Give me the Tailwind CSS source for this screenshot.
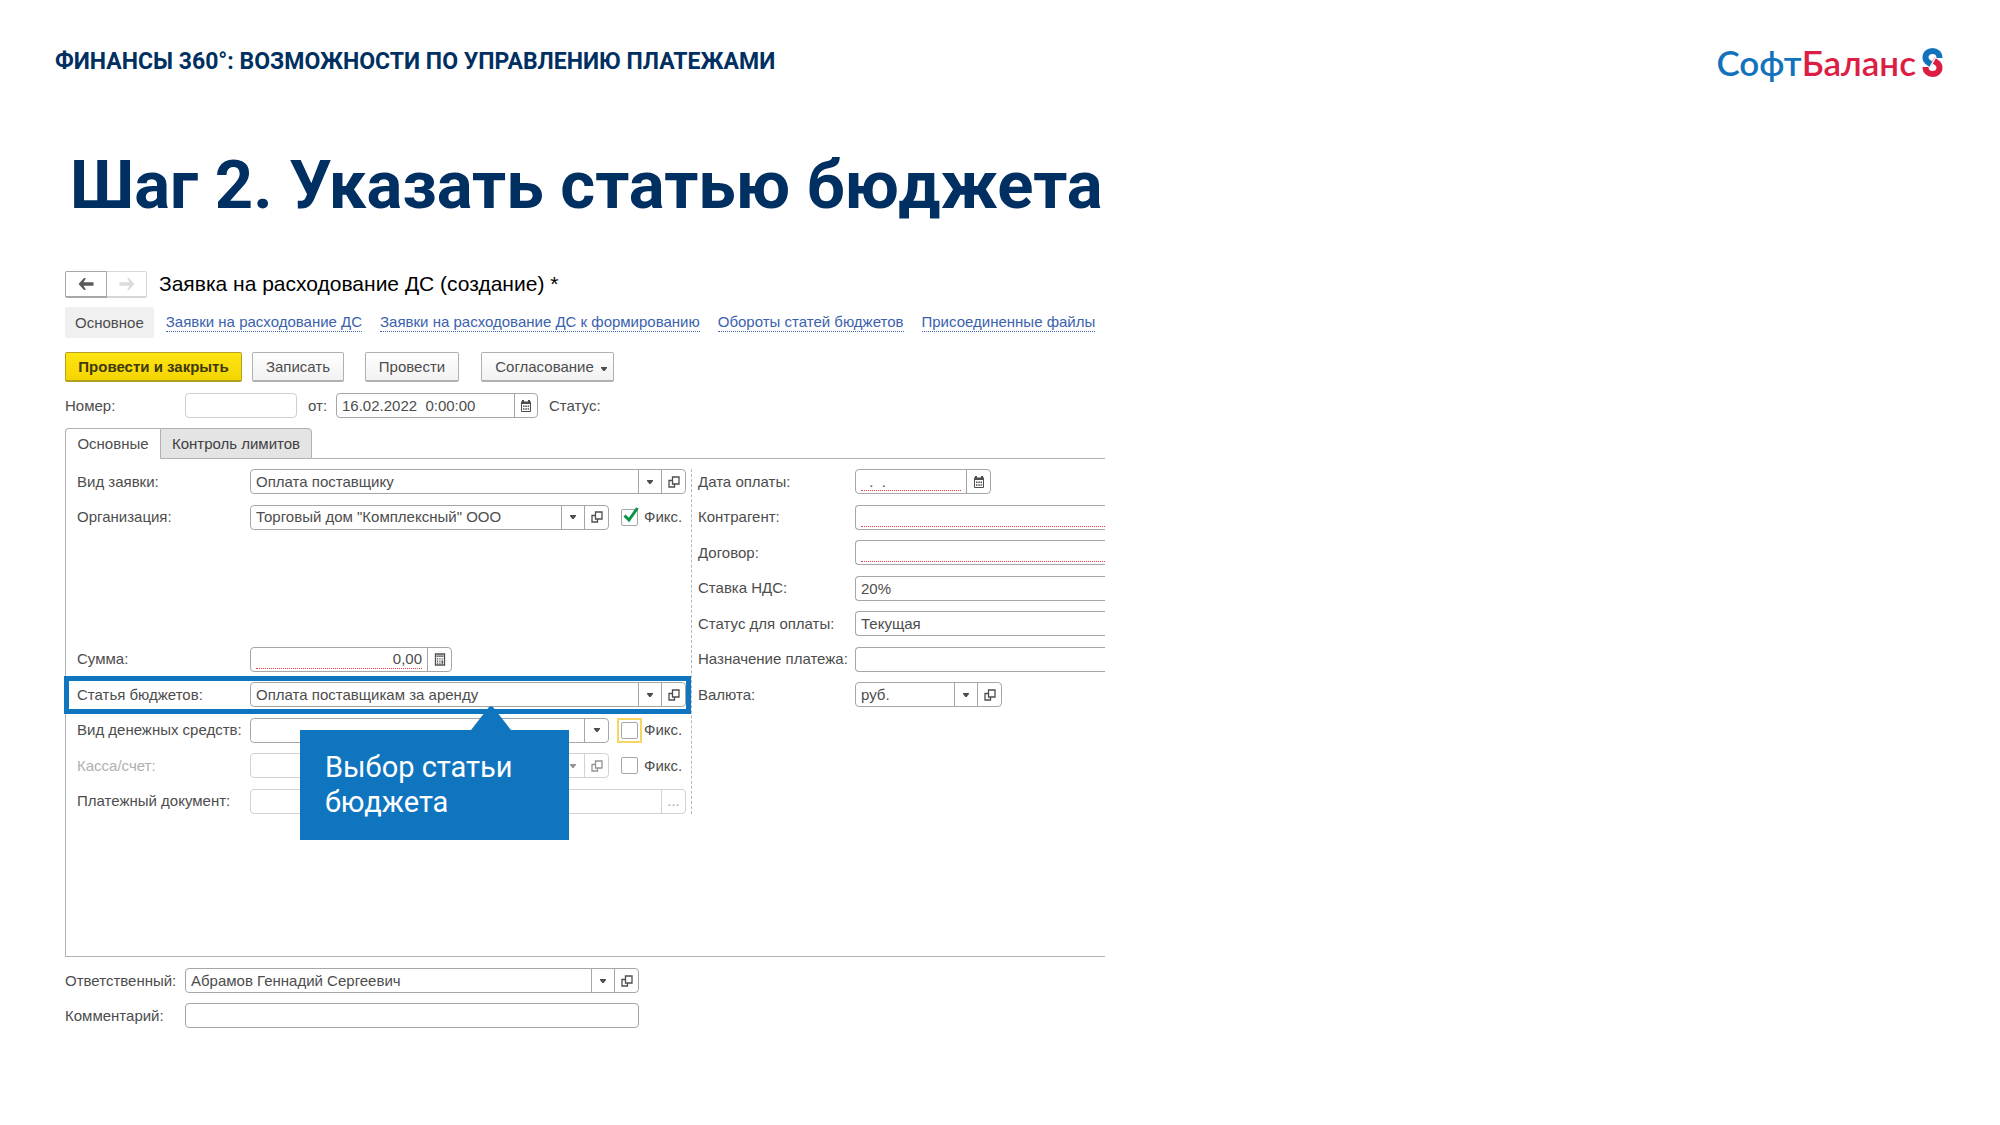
<!DOCTYPE html>
<html lang="ru">
<head>
<meta charset="utf-8">
<meta name="viewport" content="width=device-width, initial-scale=1">
<title>Финансы 360°: возможности по управлению платежами</title>
<script src="https://cdn.jsdelivr.net/npm/@tailwindcss/browser@4"></script>
</head>
<body class="min-h-screen bg-white font-['Roboto',sans-serif]">

<!-- Shared icons -->
<svg class="hidden" aria-hidden="true">
  <symbol id="caret" viewBox="0 0 8 4"><path d="M1 0h6v1L4.600 4h-1.200L1 1z" fill="currentColor"/></symbol>
  <symbol id="open" viewBox="0 0 12 12"><path d="M4.500 1h6.500v7H4.500zM4 4.500H1V11h5.500V8.500" fill="none" stroke="currentColor" stroke-width="1.300"/></symbol>
  <symbol id="calendar" viewBox="0 0 12 12"><path d="M1 1.500h1V0h2v1.500h4V0h2v1.500h1V4H1z" fill="currentColor"/><path d="M1.500 4v7.500h9V4" fill="none" stroke="currentColor"/><path d="M3 5.500h1.500V7H3zM5.300 5.500h1.500V7H5.300zM7.600 5.500h1.500V7H7.600zM3 8.300h1.500v1.500H3zM5.300 8.300h1.500v1.500H5.300zM7.600 8.300h1.500v1.500H7.600z" fill="currentColor"/></symbol>
  <symbol id="calculator" viewBox="0 0 12 13"><path d="M1.500 1h9v11h-9z" fill="none" stroke="currentColor" stroke-width="1.300"/><path d="M2.500 2.500h7v1.200h-7zM3 5.300h1.200v1.200H3zM5.300 5.300h1.200v1.200H5.300zM3 7.500h1.200v1.200H3zM5.300 7.500h1.200v1.200H5.300zM3 9.600h1.200v1.200H3zM5.300 9.600h1.200v1.200H5.300zM7.500 5.300h1.200v1.200H7.500zM7.500 7.500h1.500v3.300H7.500z" fill="currentColor"/></symbol>
  <symbol id="arrow-left" viewBox="0 0 16 12"><path d="M7.500 0v1L5.500 4.300H15.500v3.400h-10l2 3.300v1H6L.500 6 6 0z" fill="currentColor"/></symbol>
</svg>

<header class="flex h-[122px] items-center justify-between pt-[2px] pr-[57px] pl-[55px]">
  <p class="text-[23px] font-bold leading-8 text-[#002f61]">ФИНАНСЫ 360°: ВОЗМОЖНОСТИ ПО УПРАВЛЕНИЮ ПЛАТЕЖАМИ</p>
  <a href="#" class="flex items-center gap-[6px]" aria-label="СофтБаланс">
    <span class="font-['Lato',sans-serif] text-[35px] font-semibold leading-10 text-[#dc1e45]"><span class="text-[#1273bc]">Софт</span>Баланс</span>
    <svg class="h-[29px] w-[21px]" viewBox="0 0 21 29" fill="none" aria-hidden="true">
      <path d="M17.500 10C17.500 5.500 14.500 3 10.500 3 6.500 3 3.500 5.500 3.500 9.500 3.500 12 5 13.500 6.500 14.500L10 17" stroke="#1273bc" stroke-width="6"/>
      <path d="M3.500 19C3.500 23.500 6.500 26 10.500 26 14.500 26 17.500 23.500 17.500 19.500 17.500 17 16 15.500 14.500 14.500L11 12" stroke="#dc1e45" stroke-width="6"/>
      <path d="M7.500 20 13.500 9.500" stroke="#fff" stroke-width="1.500"/>
    </svg>
  </a>
</header>

<main>
  <h1 class="pt-[23px] pl-[70px] text-[67px] font-bold leading-[80px] text-[#002f61]">Шаг 2. Указать статью бюджета</h1>

  <form class="mt-[46px] ml-[65px] w-[52%] whitespace-nowrap font-['Liberation_Sans',Arial,sans-serif] text-[15px] leading-5 text-[#4d4d4d]">

    <div class="flex items-center">
      <button type="button" aria-label="Назад" class="flex h-[27px] w-[42px] items-center justify-center rounded-l-xs border border-b-2 border-[#a8a8a8] text-[#5a5a5a]"><svg class="h-3 w-4"><use href="#arrow-left"/></svg></button>
      <button type="button" aria-label="Вперед" class="flex h-[27px] w-10 items-center justify-center rounded-r-xs border border-l-0 border-b-2 border-[#d6d6d6] text-[#dcdcdc]"><svg class="h-3 w-4 rotate-180"><use href="#arrow-left"/></svg></button>
      <h2 class="ml-3 pb-[2px] text-[21px] leading-[25px] text-black">Заявка на расходование ДС (создание) *</h2>
    </div>

    <nav class="mt-[9px] flex h-[31px] items-center text-[#3a62ae]">
      <a href="#" class="mr-3 flex h-full items-center rounded-xs bg-[#f0f0f0] px-[10px] text-[#4d4d4d]">Основное</a>
      <a href="#" class="mr-[18px] border-b border-dotted border-[#3a62ae] leading-[18px]">Заявки на расходование ДС</a>
      <a href="#" class="mr-[18px] border-b border-dotted border-[#3a62ae] leading-[18px]">Заявки на расходование ДС к формированию</a>
      <a href="#" class="mr-[18px] border-b border-dotted border-[#3a62ae] leading-[18px]">Обороты статей бюджетов</a>
      <a href="#" class="border-b border-dotted border-[#3a62ae] leading-[18px]">Присоединенные файлы</a>
    </nav>

    <div class="mt-[14px] flex h-[30px]">
      <button type="submit" class="w-[177px] rounded-xs border border-b-2 border-[#b3a020] bg-linear-to-b from-[#ffe514] to-[#f3d500] font-bold text-[#40390c]">Провести и закрыть</button>
      <button type="button" class="ml-[10px] w-[92px] rounded-xs border border-b-2 border-[#b0b0b0] bg-linear-to-b from-white to-[#f2f2f2]">Записать</button>
      <button type="button" class="ml-[21px] w-[94px] rounded-xs border border-b-2 border-[#b0b0b0] bg-linear-to-b from-white to-[#f2f2f2]">Провести</button>
      <button type="button" class="ml-[22px] flex w-[133px] items-center justify-center gap-[6px] rounded-xs border border-b-2 border-[#b0b0b0] bg-linear-to-b from-white to-[#f2f2f2] pl-2">Согласование <svg class="mt-1 h-1 w-2"><use href="#caret"/></svg></button>
    </div>

    <div class="mt-[11px] flex h-[25px] items-center">
      <label for="number" class="w-[120px]">Номер:</label>
      <input id="number" type="text" class="h-full w-[112px] rounded-sm border border-[#cfcfcf] px-[5px]">
      <label for="date" class="w-[39px] pl-[11px]">от:</label>
      <div class="flex h-full w-[202px] rounded-sm border border-[#a6a6a6]">
        <input id="date" type="text" value="16.02.2022&nbsp; 0:00:00" class="min-w-0 flex-1 px-[5px]">
        <button type="button" aria-label="Календарь" class="flex w-[23px] items-center justify-center border-l border-[#a6a6a6]"><svg class="size-3"><use href="#calendar"/></svg></button>
      </div>
      <span class="ml-[11px]">Статус:</span>
    </div>

    <div role="tablist" class="mt-[10px] flex h-[31px]">
      <button type="button" role="tab" aria-selected="true" class="z-10 w-[95px] rounded-tl-sm border border-r-0 border-b-0 border-[#b0b0b0] bg-white">Основные</button>
      <button type="button" role="tab" aria-selected="false" class="w-[152px] rounded-tr-sm border border-[#b0b0b0] bg-[#e4e4e4] text-[#404040]">Контроль лимитов</button>
      <div class="flex-1 border-b border-[#b0b0b0]"></div>
    </div>

    <div role="tabpanel" class="flex h-[498px] items-start border-b border-l border-[#b0b0b0] pt-[5px] pl-[11px]">

      <div class="grid h-[355px] w-[609px] shrink-0 grid-rows-10">
        <div class="flex items-center">
          <label for="kind" class="w-[173px]">Вид заявки:</label>
          <div class="flex h-[25px] flex-1 rounded-sm border border-[#a6a6a6]">
            <div class="relative flex-1">
              <select id="kind" class="h-full w-full appearance-none px-[5px]"><option>Оплата поставщику</option></select>
              <span class="pointer-events-none absolute inset-y-0 right-0 flex w-[23px] items-center justify-center border-l border-[#a6a6a6]"><svg class="h-1 w-2"><use href="#caret"/></svg></span>
            </div>
            <button type="button" aria-label="Открыть" class="flex w-6 items-center justify-center border-l border-[#a6a6a6]"><svg class="size-3"><use href="#open"/></svg></button>
          </div>
        </div>
        <div class="flex items-center">
          <label for="org" class="w-[173px]">Организация:</label>
          <div class="flex h-[25px] w-[359px] rounded-sm border border-[#a6a6a6]">
            <div class="relative flex-1">
              <select id="org" class="h-full w-full appearance-none px-[5px]"><option>Торговый дом "Комплексный" ООО</option></select>
              <span class="pointer-events-none absolute inset-y-0 right-0 flex w-[23px] items-center justify-center border-l border-[#a6a6a6]"><svg class="h-1 w-2"><use href="#caret"/></svg></span>
            </div>
            <button type="button" aria-label="Открыть" class="flex w-6 items-center justify-center border-l border-[#a6a6a6]"><svg class="size-3"><use href="#open"/></svg></button>
          </div>
          <label class="relative ml-3 flex items-center gap-[6px]">
            <input type="checkbox" checked class="peer size-[17px] appearance-none rounded-xs border border-[#a6a6a6]">
            <svg class="pointer-events-none invisible absolute top-0 left-[2px] size-4 peer-checked:visible" viewBox="0 0 16 16"><path d="M1.500 8.500 6 13 14.500 1" fill="none" stroke="#0a9447" stroke-width="3"/></svg>
            Фикс.
          </label>
        </div>
        <div class="row-start-6 flex items-center">
          <label for="sum" class="w-[173px]">Сумма:</label>
          <div class="flex h-[25px] w-[202px] rounded-sm border border-[#a6a6a6]">
            <div class="flex-1 px-[5px] pb-[2px]"><input id="sum" type="text" value="0,00" class="h-full w-full border-b border-dotted border-[#e8403c] pt-[2px] text-right"></div>
            <button type="button" aria-label="Калькулятор" class="flex w-6 items-center justify-center border-l border-[#a6a6a6]"><svg class="h-[13px] w-3"><use href="#calculator"/></svg></button>
          </div>
        </div>
        <div class="relative row-start-7 flex items-center">
          <label for="budget" class="w-[173px]">Статья бюджетов:</label>
          <div class="flex h-[25px] flex-1 rounded-sm border border-[#a6a6a6]">
            <div class="relative flex-1">
              <select id="budget" class="h-full w-full appearance-none px-[5px]"><option>Оплата поставщикам за аренду</option></select>
              <span class="pointer-events-none absolute inset-y-0 right-0 flex w-[23px] items-center justify-center border-l border-[#a6a6a6]"><svg class="h-1 w-2"><use href="#caret"/></svg></span>
            </div>
            <button type="button" aria-label="Открыть" class="flex w-6 items-center justify-center border-l border-[#a6a6a6]"><svg class="size-3"><use href="#open"/></svg></button>
          </div>
          <!-- Highlight frame and callout over the budget item row -->
          <div class="pointer-events-none absolute -inset-y-px -right-[5px] -left-[13px] z-10 border-5 border-[#0f75bf]"></div>
          <div class="absolute top-[53px] left-[223px] z-20 h-[110px] w-[269px] bg-[#0f75bf] pt-5 pl-[25px] font-['Roboto',sans-serif] text-[29px] leading-[35px] text-white">
            <svg class="absolute -top-6 left-[171px] h-6 w-10" viewBox="0 0 40 24" aria-hidden="true"><path d="M0 24 18 1q2-1.500 4 0l18 23z" fill="#0f75bf"/></svg>
            Выбор статьи<br>бюджета
          </div>
        </div>
        <div class="row-start-8 flex items-center">
          <label for="money" class="w-[173px]">Вид денежных средств:</label>
          <div class="relative h-[25px] w-[359px] rounded-sm border border-[#a6a6a6]">
            <select id="money" class="h-full w-full appearance-none px-[5px]"><option></option></select>
            <span class="pointer-events-none absolute inset-y-0 right-0 flex w-6 items-center justify-center border-l border-[#a6a6a6]"><svg class="h-1 w-2"><use href="#caret"/></svg></span>
          </div>
          <label class="ml-2 flex items-center gap-[2px]">
            <span class="flex border-2 border-[#f5d662] p-[2px]"><input type="checkbox" class="size-[17px] appearance-none rounded-xs border border-[#a6a6a6]"></span>
            Фикс.
          </label>
        </div>
        <div class="row-start-9 flex items-center">
          <label for="cash" class="w-[173px] text-[#b0b0b0]">Касса/счет:</label>
          <div class="flex h-[25px] w-[359px] rounded-sm border border-[#d2d2d2] text-[#949494]">
            <div class="relative flex-1">
              <select id="cash" disabled class="h-full w-full appearance-none px-[5px]"><option></option></select>
              <span class="pointer-events-none absolute inset-y-0 right-0 flex w-[23px] items-center justify-center border-l border-[#d2d2d2]"><svg class="h-1 w-2"><use href="#caret"/></svg></span>
            </div>
            <button type="button" disabled aria-label="Открыть" class="flex w-6 items-center justify-center border-l border-[#d2d2d2]"><svg class="size-3"><use href="#open"/></svg></button>
          </div>
          <label class="ml-3 flex items-center gap-[6px]">
            <input type="checkbox" class="size-[17px] appearance-none rounded-xs border border-[#a6a6a6]">
            Фикс.
          </label>
        </div>
        <div class="row-start-10 flex items-center">
          <label for="doc" class="w-[173px]">Платежный документ:</label>
          <div class="flex h-[25px] flex-1 rounded-sm border border-[#d2d2d2]">
            <input id="doc" type="text" class="min-w-0 flex-1 px-[5px]">
            <button type="button" aria-label="Выбрать" class="w-6 border-l border-[#d2d2d2] text-[#a6a6a6]">...</button>
          </div>
        </div>
      </div>

      <div class="mt-[5px] ml-[5px] h-[345px] border-l border-dashed border-[#b8b8b8]"></div>

      <div class="ml-[6px] grid h-[355px] min-w-0 flex-1 grid-rows-10">
        <div class="flex items-center">
          <label for="paydate" class="w-[157px]">Дата оплаты:</label>
          <div class="flex h-[25px] w-[136px] rounded-sm border border-[#a6a6a6]">
            <div class="min-w-0 flex-1 px-[5px] pb-[2px]"><input id="paydate" type="text" value="&nbsp; .&nbsp; ." class="h-full w-full border-b border-dotted border-[#e8403c] pt-[2px]"></div>
            <button type="button" aria-label="Календарь" class="flex w-6 items-center justify-center border-l border-[#a6a6a6]"><svg class="size-3"><use href="#calendar"/></svg></button>
          </div>
        </div>
        <div class="flex items-center">
          <label for="partner" class="w-[157px]">Контрагент:</label>
          <div class="h-[25px] min-w-0 flex-1 rounded-l-sm border border-r-0 border-[#a6a6a6] pb-[2px] pl-[5px]"><input id="partner" type="text" class="h-full w-full border-b border-dotted border-[#e8403c]"></div>
        </div>
        <div class="flex items-center">
          <label for="contract" class="w-[157px]">Договор:</label>
          <div class="h-[25px] min-w-0 flex-1 rounded-l-sm border border-r-0 border-[#a6a6a6] pb-[2px] pl-[5px]"><input id="contract" type="text" class="h-full w-full border-b border-dotted border-[#e8403c]"></div>
        </div>
        <div class="flex items-center">
          <label for="vat" class="w-[157px]">Ставка НДС:</label>
          <input id="vat" type="text" value="20%" class="h-[25px] min-w-0 flex-1 rounded-l-sm border border-r-0 border-[#a6a6a6] px-[5px]">
        </div>
        <div class="flex items-center">
          <label for="status" class="w-[157px]">Статус для оплаты:</label>
          <input id="status" type="text" value="Текущая" class="h-[25px] min-w-0 flex-1 rounded-l-sm border border-r-0 border-[#a6a6a6] px-[5px]">
        </div>
        <div class="flex items-center">
          <label for="purpose" class="w-[157px]">Назначение платежа:</label>
          <input id="purpose" type="text" class="h-[25px] min-w-0 flex-1 rounded-l-sm border border-r-0 border-[#a6a6a6] px-[5px]">
        </div>
        <div class="flex items-center">
          <label for="currency" class="w-[157px]">Валюта:</label>
          <div class="flex h-[25px] w-[147px] rounded-sm border border-[#a6a6a6]">
            <div class="relative flex-1">
              <select id="currency" class="h-full w-full appearance-none px-[5px]"><option>руб.</option></select>
              <span class="pointer-events-none absolute inset-y-0 right-0 flex w-[23px] items-center justify-center border-l border-[#a6a6a6]"><svg class="h-1 w-2"><use href="#caret"/></svg></span>
            </div>
            <button type="button" aria-label="Открыть" class="flex w-6 items-center justify-center border-l border-[#a6a6a6]"><svg class="size-3"><use href="#open"/></svg></button>
          </div>
        </div>
      </div>
    </div>

    <div class="mt-[11px] flex items-center">
      <label for="owner" class="w-[120px]">Ответственный:</label>
      <div class="flex h-[25px] w-[454px] rounded-sm border border-[#a6a6a6]">
        <div class="relative flex-1">
          <select id="owner" class="h-full w-full appearance-none px-[5px]"><option>Абрамов Геннадий Сергеевич</option></select>
          <span class="pointer-events-none absolute inset-y-0 right-0 flex w-[23px] items-center justify-center border-l border-[#a6a6a6]"><svg class="h-1 w-2"><use href="#caret"/></svg></span>
        </div>
        <button type="button" aria-label="Открыть" class="flex w-6 items-center justify-center border-l border-[#a6a6a6]"><svg class="size-3"><use href="#open"/></svg></button>
      </div>
    </div>
    <div class="mt-[10px] flex items-center">
      <label for="comment" class="w-[120px]">Комментарий:</label>
      <input id="comment" type="text" class="h-[25px] w-[454px] rounded-sm border border-[#a6a6a6] px-[5px]">
    </div>
  </form>
</main>
</body>
</html>
